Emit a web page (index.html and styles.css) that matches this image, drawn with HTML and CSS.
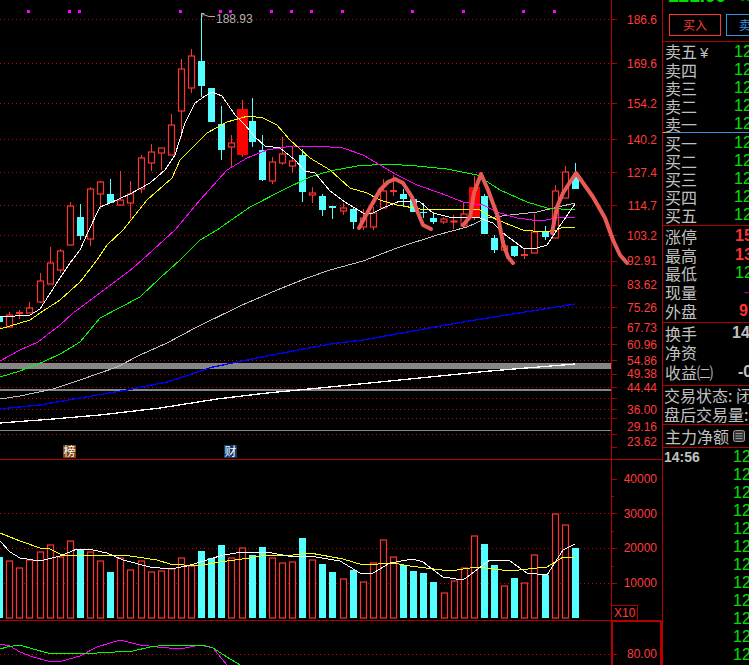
FILE: index.html
```html
<!DOCTYPE html>
<html lang="zh">
<head>
<meta charset="utf-8">
<title>K线图</title>
<link rel="stylesheet" href="styles.css">
</head>
<body>
<main class="terminal">
<svg class="chart" width="662" height="665" viewBox="0 0 662 665" xmlns="http://www.w3.org/2000/svg">
  <g class="marks">
    <rect x="27" y="10" width="3" height="3"/><rect x="68" y="10" width="3" height="3"/><rect x="78" y="10" width="3" height="3"/><rect x="179" y="10" width="3" height="3"/><rect x="219" y="10" width="3" height="3"/><rect x="229" y="10" width="3" height="3"/><rect x="270" y="10" width="3" height="3"/><rect x="290" y="10" width="3" height="3"/><rect x="310" y="10" width="3" height="3"/><rect x="341" y="10" width="3" height="3"/><rect x="411" y="10" width="3" height="3"/><rect x="462" y="10" width="3" height="3"/><rect x="522" y="10" width="3" height="3"/><rect x="553" y="10" width="3" height="3"/>
  </g>
  <path class="grid" d="M0 19.5H611M0 63.5H611M0 103.5H611M0 139.5H611M0 172.5H611M0 205.5H611M0 235.5H611M0 261.5H611M0 285.5H611M0 307.5H611M0 327.5H611M0 344.5H611M0 360.5H611M0 374.5H611M0 387.5H611M0 398.5H611M0 409.5H611M0 418.5H611M0 434.5H611M0 513.5H611M0 548.5H611M0 583.5H611M0 654.5H611"/>
  <g class="bands">
    <rect x="0" y="363" width="611" height="6"/>
    <rect x="0" y="389" width="611" height="2"/>
    <rect x="0" y="430" width="611" height="1"/>
  </g>
  <path class="frame" d="M611.5 0V665M0 459.5H662M0 620.5H611M617 19.5H611M617 63.5H611M617 103.5H611M617 139.5H611M617 172.5H611M617 205.5H611M617 235.5H611M617 261.5H611M617 285.5H611M617 307.5H611M617 327.5H611M617 344.5H611M617 360.5H611M617 374.5H611M617 387.5H611M617 398.5H611M617 409.5H611M617 418.5H611M617 434.5H611M617 447.5H611M617 479.5H611M614 496.5H611M617 513.5H611M614 531.5H611M617 548.5H611M614 566.5H611M617 583.5H611M617 654.5H611M611.5 605.5H637.5V620"/>
  <path class="frame-thick" d="M612 621H661M612 621V665M661 621V665"/>

  <path class="wick-red" d="M9.5 312V327M19.5 310V319M29.5 302V313M40.5 273V303M50.5 247V284M60.5 249V273M70.5 202V245M90.5 187V246M100.5 181V209M120.5 171V205M130.5 181V219M141.5 155V193M151.5 144V171M161.5 148V170M171.5 114V155M181.5 59V137M191.5 49V93M231.5 135V168M242.5 100V157M272.5 157V184M282.5 137V165M292.5 146V173M312.5 187V203M343.5 203V215M363.5 209V230M373.5 207V230M383.5 179V208M393.5 175V196M443.5 217V224M453.5 215V229M463.5 203V227M474.5 176V220M504.5 240V252M524.5 248V259M534.5 214V253M555.5 185V238M565.5 166V198"/>
  <path class="wick-cyan" d="M80.5 204V240M110.5 179V203M201.5 13V97M221.5 106V160M252.5 98V147M262.5 135V181M302.5 149V202M322.5 194V216M332.5 206V219M353.5 207V229M403.5 189V207M413.5 197V212M423.5 203V218M433.5 212V224M484.5 194V234M494.5 235V253M514.5 246V257M545.5 226V240M575.5 163V189"/>
  <path class="cross-red" d="M16 312.5H23M390 191H397M521 255H528"/>
  <path class="cross-cyan" d="M329 207H336M420 212.5H427"/>

  <g class="up">
    <rect x="6.5" y="315" width="6" height="12"/><rect x="26.5" y="308" width="6" height="5"/><rect x="37.5" y="281" width="6" height="21"/><rect x="47.5" y="263" width="6" height="21"/><rect x="57.5" y="251" width="6" height="19"/><rect x="67.5" y="206" width="6" height="39"/><rect x="87.5" y="189" width="6" height="50"/><rect x="97.5" y="182" width="6" height="12"/><rect x="117.5" y="200" width="6" height="5"/><rect x="127.5" y="194" width="6" height="9"/><rect x="138.5" y="158" width="6" height="31"/><rect x="148.5" y="152" width="6" height="11"/><rect x="158.5" y="148" width="6" height="5"/><rect x="168.5" y="125" width="6" height="30"/><rect x="178.5" y="69" width="6" height="42"/><rect x="188.5" y="56" width="6" height="32"/><rect x="228.5" y="143" width="6" height="4"/><rect x="269.5" y="162" width="6" height="19"/><rect x="279.5" y="154" width="6" height="9"/><rect x="289.5" y="161" width="6" height="5"/><rect x="309.5" y="193" width="6" height="2"/><rect x="340.5" y="208" width="6" height="3"/><rect x="360.5" y="218" width="6" height="9"/><rect x="370.5" y="213" width="6" height="14"/><rect x="380.5" y="191" width="6" height="17"/><rect x="441" y="219" width="6" height="3"/><rect x="451" y="221" width="6" height="1"/><rect x="461" y="214" width="6" height="12"/><rect x="501.5" y="246" width="6" height="4"/><rect x="531.5" y="232" width="6" height="21"/><rect x="552.5" y="191" width="6" height="47"/><rect x="562.5" y="172" width="6" height="26"/>
  </g>
  <g class="solid-red">
    <rect x="237" y="109" width="11" height="46"/><rect x="469" y="187" width="11" height="31"/>
  </g>
  <g class="down">
    <rect x="0" y="317" width="3" height="5"/><rect x="77" y="217" width="7" height="19"/><rect x="107" y="194" width="7" height="9"/><rect x="198" y="61" width="7" height="25"/><rect x="208" y="88" width="7" height="34"/><rect x="218" y="124" width="7" height="26"/><rect x="249" y="121" width="7" height="21"/><rect x="259" y="150" width="7" height="30"/><rect x="299" y="155" width="7" height="37"/><rect x="319" y="196" width="7" height="14"/><rect x="350" y="209" width="7" height="13"/><rect x="400" y="194" width="7" height="5"/><rect x="410" y="199" width="7" height="13"/><rect x="430" y="218" width="7" height="4"/><rect x="481" y="196" width="7" height="38"/><rect x="491" y="238" width="7" height="12"/><rect x="511" y="246" width="7" height="10"/><rect x="542" y="231" width="7" height="6"/><rect x="572" y="177" width="7" height="12"/>
  </g>

  <polyline class="ma ma-silver" points="0,399 20,396 53,389 80,380 117,367 140,355 167,343 197,327 240,306 277,290 307,278 330,270 363,261 397,248 437,235 467,227 487,218 510,215 537,212 575,203"/>
  <polyline class="ma ma-green" points="0,377 20,371 43,362 62,353 80,342 100,318 140,297 160,278 180,260 200,240 217,230 250,207 283,190 310,177 330,171 357,166 387,164 417,166 447,169 477,175 500,190 527,202 547,208 575,210"/>
  <polyline class="ma ma-magenta" points="0,361 20,350 38,342 60,325 73,313 100,293 133,268 153,250 175,230 200,200 227,170 247,158 267,150 293,146 330,147 343,148 363,155 380,165 397,175 417,185 440,193 463,202 483,205 497,212 517,218 540,221 557,218 575,217"/>
  <polyline class="ma ma-yellow" points="0,329 30,320 40,313 60,300 80,282 97,260 107,245 123,230 147,200 172,178 180,160 190,150 207,133 227,122 248,116 263,118 277,125 290,140 310,158 330,170 350,188 367,193 380,200 397,205 420,209 463,209 480,210 493,218 510,225 523,230 543,232 557,230 563,227 575,227"/>
  <polyline class="ma ma-white" points="0,317 30,315 40,309 60,278 70,263 80,250 88,232 100,207 110,203 130,194 150,183 165,170 175,155 185,123 195,103 205,96 212,92 222,96 235,115 245,125 255,137 265,146 280,148 295,160 305,171 315,173 330,191 345,202 363,213 373,213 383,208 400,201 420,202 433,213 453,218 477,217 493,223 503,233 523,248 537,248 547,245 557,230 575,204"/>
  <polyline class="ma ma-blue" points="0,409 40,405 80,398 127,390 167,382 213,367 267,356 330,344 363,340 413,331 463,322 513,314 575,304"/>
  <polyline class="ma ma-long" points="0,423 53,419 100,415 160,408 217,399 267,393 330,387 430,377 490,371 575,364"/>

  <path class="sketch" d="M359 228L370 208L380 190L388 182L395 179L403 183L412 197L418 213L423 225L431 229"/>
  <path class="sketch" d="M463 225L470 217L474 193L481 174L488 190L498 217L503 243L508 257L513 263"/>
  <path class="sketch" d="M552 233L557 207L563 193L576 173L593 197L605 218L613 240L620 255L627 263"/>

  <path class="peak" d="M202 17V13.5H204.5M203 14.5L209 16.5H215"/>
  <text class="peak-label" x="216" y="23">188.93</text>

  <g class="axis-labels">
    <text x="657" y="24">186.6</text><text x="657" y="68">169.6</text><text x="657" y="108">154.2</text><text x="657" y="144">140.2</text><text x="657" y="177">127.4</text><text x="657" y="210">114.7</text><text x="657" y="240">103.2</text><text x="657" y="265">92.91</text><text x="657" y="289">83.62</text><text x="657" y="312">75.26</text><text x="657" y="332">67.73</text><text x="657" y="349">60.96</text><text x="657" y="365">54.86</text><text x="657" y="378">49.38</text><text x="657" y="392">44.44</text><text x="657" y="414">36.00</text><text x="657" y="431">29.16</text><text x="657" y="446">23.62</text>
    <text x="657" y="483">40000</text><text x="657" y="518">30000</text><text x="657" y="552">20000</text><text x="657" y="587">10000</text><text x="657" y="658">80.00</text>
  </g>
  <text class="scale" x="614" y="617">X10</text>

  <rect class="tag-rank" x="63" y="445" width="13" height="13"/>
  <text class="tag-text" x="69.5" y="456">榜</text>
  <rect class="tag-fin" x="224" y="445" width="13" height="13"/>
  <text class="tag-text" x="230.5" y="456">财</text>

  <g class="vol-up">
    <rect x="6.5" y="561" width="6" height="57"/><rect x="16.5" y="568" width="6" height="50"/><rect x="26.5" y="560" width="6" height="58"/><rect x="37.5" y="552" width="6" height="66"/><rect x="47.5" y="545" width="6" height="73"/><rect x="57.5" y="557" width="6" height="61"/><rect x="67.5" y="541" width="6" height="77"/><rect x="87.5" y="552" width="6" height="66"/><rect x="97.5" y="561" width="6" height="57"/><rect x="117.5" y="558" width="6" height="60"/><rect x="127.5" y="570" width="6" height="48"/><rect x="138.5" y="561" width="6" height="57"/><rect x="148.5" y="572" width="6" height="46"/><rect x="158.5" y="571" width="6" height="47"/><rect x="168.5" y="569" width="6" height="49"/><rect x="178.5" y="558" width="6" height="60"/><rect x="188.5" y="566" width="6" height="52"/><rect x="228.5" y="558" width="6" height="60"/><rect x="239.5" y="548" width="6" height="70"/><rect x="269.5" y="558" width="6" height="60"/><rect x="279.5" y="563" width="6" height="55"/><rect x="289.5" y="562" width="6" height="56"/><rect x="309.5" y="560" width="6" height="58"/><rect x="340.5" y="579" width="6" height="39"/><rect x="360.5" y="582" width="6" height="36"/><rect x="370.5" y="563" width="6" height="55"/><rect x="380.5" y="540" width="6" height="78"/><rect x="390.5" y="557" width="6" height="61"/><rect x="441.5" y="593" width="6" height="25"/><rect x="451.5" y="581" width="6" height="37"/><rect x="461.5" y="568" width="6" height="50"/><rect x="471.5" y="536" width="6" height="82"/><rect x="501.5" y="586" width="6" height="32"/><rect x="521.5" y="583" width="6" height="35"/><rect x="531.5" y="555" width="6" height="63"/><rect x="552.5" y="514" width="6" height="104"/><rect x="562.5" y="525" width="6" height="93"/>
  </g>
  <g class="down">
    <rect x="0" y="557" width="3" height="61"/><rect x="77" y="549" width="7" height="69"/><rect x="107" y="572" width="7" height="46"/><rect x="198" y="551" width="7" height="67"/><rect x="208" y="558" width="7" height="60"/><rect x="218" y="545" width="7" height="73"/><rect x="249" y="555" width="7" height="63"/><rect x="259" y="547" width="7" height="71"/><rect x="299" y="538" width="7" height="80"/><rect x="319" y="564" width="7" height="54"/><rect x="329" y="572" width="7" height="46"/><rect x="350" y="570" width="7" height="48"/><rect x="400" y="565" width="7" height="53"/><rect x="410" y="571" width="7" height="47"/><rect x="420" y="573" width="7" height="45"/><rect x="430" y="582" width="7" height="36"/><rect x="481" y="544" width="7" height="74"/><rect x="491" y="565" width="7" height="53"/><rect x="511" y="578" width="7" height="40"/><rect x="542" y="575" width="7" height="43"/><rect x="572" y="548" width="7" height="70"/>
  </g>
  <polyline class="ma ma-yellow" points="0,533 20,541 40,548 50,549 62,555 100,555 130,556 157,560 170,564 197,566 220,562 250,558 267,555 293,555 310,553 343,559 363,565 393,563 410,566 450,571 477,567 510,571 537,568 547,567 563,557 575,558"/>
  <polyline class="ma ma-white" points="0,541 10,552 20,558 40,561 60,556 77,549 93,550 107,553 123,560 150,567 170,569 187,566 207,560 223,555 243,552 257,552 267,552 293,557 310,556 340,561 360,573 373,573 390,563 413,559 423,562 443,577 463,580 490,560 510,561 527,573 547,575 563,550 575,544"/>

  <polyline class="ma ma-magenta" points="0,644 10,646 20,652 33,657 48,661 62,661 80,656 97,647 120,640 140,645 157,647 180,649 200,645 213,648 227,665"/>
  <polyline class="ma ma-green" points="0,649 7,647 20,645 33,649 48,653 75,653 83,654 97,653 133,651 150,647 167,645 197,645 203,645 213,648 227,657 240,665"/>
</svg>

<aside class="panel">
  <header class="quote">
    <div class="price"><span class="price-now">121.00</span><span class="price-pct">0.</span></div>
    <div class="trade">
      <span class="btn btn-buy">买入</span>
      <span class="btn btn-sell">卖</span>
    </div>
  </header>
  <section class="book-sell">
    <div class="row"><span>卖五<i class="yen">¥</i></span><b class="up-green">12</b></div>
    <div class="row"><span>卖四</span><b class="up-green">12</b></div>
    <div class="row"><span>卖三</span><b class="up-green">12</b></div>
    <div class="row"><span>卖二</span><b class="up-green">12</b></div>
    <div class="row"><span>卖一</span><b class="up-green">12</b></div>
  </section>
  <section class="book-buy">
    <div class="row"><span>买一</span><b class="up-green">12</b></div>
    <div class="row"><span>买二</span><b class="up-green">12</b></div>
    <div class="row"><span>买三</span><b class="up-green">12</b></div>
    <div class="row"><span>买四</span><b class="up-green">12</b></div>
    <div class="row"><span>买五</span><b class="up-green">12</b></div>
  </section>
  <section class="stats">
    <div class="row"><span>涨停</span><b class="val-red">15</b></div>
    <div class="row"><span>最高</span><b class="val-red">13</b></div>
    <div class="row"><span>最低</span><b class="up-green val-shift">12</b></div>
    <div class="row"><span>现量</span><b class="val-purple">-</b></div>
    <div class="row"><span>外盘</span><b class="val-red val-out">91</b></div>
  </section>
  <section class="extra">
    <div class="row"><span>换手</span><b class="val-grey val-far">14.</b></div>
    <div class="row"><span>净资</span></div>
    <div class="row"><span>收益㈡</span><b class="val-grey val-near">-0</b></div>
  </section>
  <section class="state">
    <div class="line">交易状态: 闭</div>
    <div class="line">盘后交易量:</div>
  </section>
  <section class="flow">
    <span>主力净额</span>
    <svg class="flow-icon" width="12" height="12" viewBox="0 0 12 12"><rect x="0.5" y="0.5" width="11" height="11" rx="2"/><path d="M2.5 3.5H9.5M2.5 6H9.5M2.5 8.5H9.5"/></svg>
  </section>
  <section class="ticks">
    <div class="tick"><span class="time">14:56</span><b class="up-green">12</b></div>
    <div class="tick"><b class="up-green">12</b></div>
    <div class="tick"><b class="up-green">12</b></div>
    <div class="tick"><b class="up-green">12</b></div>
    <div class="tick"><b class="up-green">12</b></div>
    <div class="tick"><b class="up-green">12</b></div>
    <div class="tick"><b class="up-green">12</b></div>
    <div class="tick"><b class="up-green">12</b></div>
    <div class="tick"><b class="up-green">12</b></div>
    <div class="tick"><b class="up-green">12</b></div>
    <div class="tick"><b class="up-green">12</b></div>
    <div class="tick"><b class="up-green">12</b></div>
  </section>
</aside>
</main>
</body>
</html>
```

FILE: styles.css
```css
html, body {
  margin: 0;
  padding: 0;
  background: #000;
  height: 100%;
  overflow: hidden;
}
.terminal {
  display: flex;
  width: 749px;
  height: 665px;
  overflow: hidden;
  background: #000;
  font-family: "Noto Sans CJK SC", "Liberation Sans", sans-serif;
  color: #c0c0c0;
}
.chart { flex: none; display: block; }
.marks rect { fill: #ff00ff; }
.grid { stroke: #d80000; stroke-width: 1; stroke-dasharray: 1 3; fill: none; shape-rendering: crispEdges; }
.bands rect { fill: #868686; }
.frame { stroke: #b00000; stroke-width: 1; fill: none; shape-rendering: crispEdges; }
.frame-thick { stroke: #b80000; stroke-width: 2; fill: none; shape-rendering: crispEdges; }
.wick-red, .cross-red { stroke: #ff3232; stroke-width: 1; fill: none; shape-rendering: crispEdges; }
.cross-red { stroke-width: 2; }
.wick-cyan { stroke: #54ffff; stroke-width: 1; fill: none; shape-rendering: crispEdges; }
.cross-cyan { stroke: #54ffff; stroke-width: 1.5; fill: none; shape-rendering: crispEdges; }
.up rect, .vol-up rect { fill: #000; stroke: #ff3232; stroke-width: 1.2; }
.solid-red rect { fill: #ff0000; }
.down rect { fill: #54ffff; }
.ma { fill: none; stroke-width: 1; shape-rendering: crispEdges; }
.ma-silver { stroke: #c0c0c0; }
.ma-green { stroke: #00ff00; }
.ma-magenta { stroke: #ff00ff; }
.ma-yellow { stroke: #ffff00; }
.ma-white { stroke: #ffffff; }
.ma-blue { stroke: #0000ff; stroke-width: 1.3; }
.ma-long { stroke: #ffffff; stroke-width: 1.3; }
.sketch { fill: none; stroke: #e85a56; stroke-width: 4; stroke-linecap: round; stroke-linejoin: round; }
.peak { fill: none; stroke: #b0b0b0; stroke-width: 1; }
.peak-label { fill: #b0b0b0; font: 12px "Liberation Sans", sans-serif; }
.axis-labels text { fill: #ff3c3c; font: 12px "Liberation Sans", sans-serif; text-anchor: end; }
.scale { fill: #ff3c3c; font: 12px "Liberation Sans", sans-serif; }
.tag-rank { fill: #7a4510; }
.tag-fin { fill: #0f3a66; }
.tag-text { fill: #ffffff; font: 12px "Noto Sans CJK SC", sans-serif; text-anchor: middle; }

.panel {
  flex: none;
  width: 87px;
  height: 665px;
  overflow: hidden;
  box-sizing: border-box;
  border-left: 1px solid #b00000;
  font-size: 16px;
}
.quote { height: 42px; box-sizing: border-box; border-bottom: 1px solid #b00000; overflow: hidden; }
.price {
  display: flex;
  align-items: flex-end;
  height: 5px;
  overflow: hidden;
  padding-left: 5px;
  font-family: "Liberation Sans", sans-serif;
  font-weight: 700;
  color: #00e000;
}
.price-now { font-size: 19px; line-height: 19px; flex: none; }
.price-pct { font-size: 13px; line-height: 16px; margin-left: 13px; flex: none; color: #009000; }
.trade { display: flex; gap: 5px; padding: 9px 0 0 6px; }
.btn {
  flex: none;
  box-sizing: border-box;
  height: 22px;
  width: 52px;
  text-align: center;
  font-size: 12px;
  line-height: 19px;
  border: 1px solid;
}
.btn-buy { color: #ff3c3c; border-color: #ff3232; }
.btn-sell { color: #3c90e0; border-color: #3c90e0; width: 40px; text-align: left; padding-left: 12px; }

.book-sell { position: relative; box-sizing: border-box; height: 91px; padding-top: 1px; border-bottom: 1px solid #3c90e0; }
.book-sell::after {
  content: "";
  position: absolute;
  left: 0;
  bottom: -1px;
  width: 6px;
  height: 1px;
  background: #e0a020;
}
.book-buy { height: 93px; padding-top: 1px; box-sizing: border-box; border-bottom: 1px solid #b00000; }
.row {
  display: flex;
  align-items: center;
  justify-content: space-between;
  height: 18px;
  padding-left: 2px;
  white-space: nowrap;
  line-height: 18px;
}
.yen { font-family: "Liberation Sans", sans-serif; font-style: normal; font-size: 15px; margin-left: 3px; }
.row b, .tick b {
  font-family: "Liberation Sans", sans-serif;
  font-weight: 400;
  font-size: 16px;
  flex: none;
  width: 15px;
}
.up-green { color: #00e000; }
.val-red { color: #ff3232; margin-right: -1px; }
.row b.val-red, .row b.val-grey { font-weight: 700; }
.val-shift { margin-right: -1px; }
.val-purple { color: #b000b0; text-align: right; }
.val-grey { color: #c0c0c0; }
.row b.val-out { margin-right: -5px; }
.row b.val-far { margin-right: 2px; }
.row b.val-near { margin-right: -4px; }

.stats { padding-top: 1px; height: 97px; box-sizing: border-box; border-bottom: 1px solid #b00000; }
.stats .row { height: 18.6px; }
.extra { height: 63px; box-sizing: border-box; border-bottom: 1px solid #b00000; }
.extra .row { height: 19.5px; }
.state { height: 39px; box-sizing: border-box; border-bottom: 1px solid #b00000; padding-left: 1px; }
.line { height: 19px; line-height: 19px; white-space: nowrap; }
.flow {
  display: flex;
  align-items: center;
  gap: 4px;
  height: 23px;
  box-sizing: border-box;
  padding-left: 2px;
  border-bottom: 1px solid #b00000;
  white-space: nowrap;
}
.flow-icon { flex: none; }
.flow-icon rect { fill: #333; stroke: #9a9a9a; }
.flow-icon path { stroke: #9a9a9a; stroke-width: 1; fill: none; }
.ticks { display: flex; flex-direction: column; }
.tick {
  display: flex;
  align-items: center;
  justify-content: flex-end;
  position: relative;
  height: 18px;
  padding-right: 1px;
}
.time {
  position: absolute;
  left: 1px;
  font-family: "Liberation Sans", sans-serif;
  font-size: 14px;
  font-weight: 700;
  color: #c0c0c0;
}
```
